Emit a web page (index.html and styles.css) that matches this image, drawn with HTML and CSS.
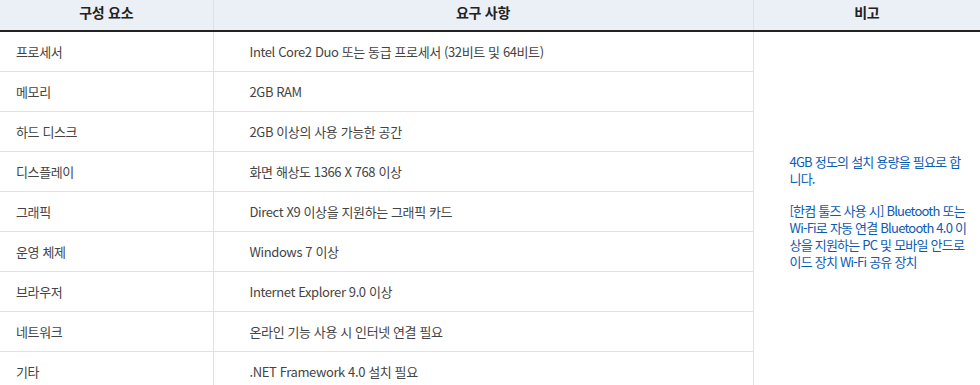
FILE: index.html
```html
<!DOCTYPE html>
<html lang="ko">
<head>
<meta charset="utf-8">
<link rel="stylesheet" href="styles.css">
</head>
<body>
<table class="spec">
  <colgroup>
    <col class="c1"><col class="c2"><col class="c3">
  </colgroup>
  <thead>
    <tr><th>구성 요소</th><th>요구 사항</th><th>비고</th></tr>
  </thead>
  <tbody>
    <tr><td class="name">프로세서</td><td class="req">Intel Core2 Duo 또는 동급 프로세서 (32비트 및 64비트)</td>
      <td class="note" rowspan="9"><p>4GB 정도의 설치 용량을 필요로 합니다.</p><p>[한컴 툴즈 사용 시] Bluetooth 또는 Wi-Fi로 자동 연결 Bluetooth 4.0 이상을 지원하는 PC 및 모바일 안드로이드 장치 Wi-Fi 공유 장치</p></td></tr>
    <tr><td class="name">메모리</td><td class="req">2GB RAM</td></tr>
    <tr><td class="name">하드 디스크</td><td class="req">2GB 이상의 사용 가능한 공간</td></tr>
    <tr><td class="name">디스플레이</td><td class="req">화면 해상도 1366 X 768 이상</td></tr>
    <tr><td class="name">그래픽</td><td class="req">Direct X9 이상을 지원하는 그래픽 카드</td></tr>
    <tr><td class="name">운영 체제</td><td class="req">Windows 7 이상</td></tr>
    <tr><td class="name">브라우저</td><td class="req">Internet Explorer 9.0 이상</td></tr>
    <tr><td class="name">네트워크</td><td class="req">온라인 기능 사용 시 인터넷 연결 필요</td></tr>
    <tr><td class="name">기타</td><td class="req">.NET Framework 4.0 설치 필요</td></tr>
  </tbody>
</table>
</body>
</html>
```

FILE: styles.css
```css
html, body {
  margin: 0;
  padding: 0;
  background: #fff;
}
body {
  font-family: "Noto Sans CJK KR", "Noto Sans", sans-serif;
  font-size: 13px;
  color: #444;
  letter-spacing: -0.03em;
}
.spec {
  width: 980px;
  border-collapse: collapse;
  table-layout: fixed;
}
.c1 { width: 213px; }
.c2 { width: 540px; }
.c3 { width: 227px; }
.spec th {
  height: 24px;
  padding: 0 0 6px;
  background: #ebf0f7;
  color: #222;
  font-weight: bold;
  font-size: 14px;
  line-height: 20px;
  letter-spacing: -0.02em;
  text-align: center;
  border-bottom: 2px solid #222;
  border-left: 1px solid #dde2ea;
}
.spec th:first-child { border-left: 0; }
.spec td {
  height: 39px;
  padding: 0;
  border-bottom: 1px solid #e2e2e2;
  border-left: 1px solid #e2e2e2;
  vertical-align: middle;
}
.spec td.name {
  border-left: 0;
  padding-left: 16px;
}
.spec td.req {
  padding-left: 36px;
}
.spec td.note {
  padding: 0 13px 0 36px;
  color: #0b5bb5;
  line-height: 17px;
  letter-spacing: -0.06em;
}
.note p { margin: 0; }
.note p + p { margin-top: 15px; }
```
